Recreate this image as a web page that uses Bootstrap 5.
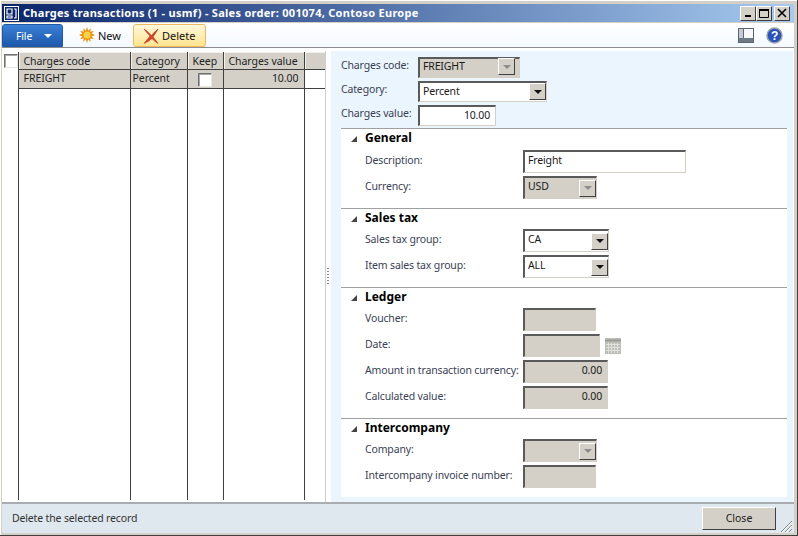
<!DOCTYPE html>
<html lang="en">
<head>
<meta charset="utf-8">
<title>Charges transactions</title>
<link href="https://cdn.jsdelivr.net/npm/bootstrap@5.3.0/dist/css/bootstrap.min.css" rel="stylesheet">
<style>
html,body{height:100%;margin:0;overflow:hidden}
body{font-family:"Noto Sans","DejaVu Sans",sans-serif;font-size:10.5px;letter-spacing:-.15px;color:#1c1c1c;background:#d4d0c8}
.win{width:798px;height:536px;background:#d4d0c8;border-right:1px solid #404040;border-bottom:1px solid #404040;padding:4px 3px 2px 2px;box-shadow:inset 1px 1px 0 #fff}
.win>*{flex:none}
.ttl{height:18px;background:linear-gradient(90deg,#0a246a,#a6caf0);color:#fff;font-weight:700;font-size:11px;letter-spacing:.28px;padding-left:2px;margin-bottom:1px;white-space:nowrap}
.wbtn{width:16px;height:15px;background:#d4d0c8;border:1px solid;border-color:#fff #404040 #404040 #fff;display:flex;align-items:center;justify-content:center}
.wbtn.sep{margin-left:2px}
.tbar{height:25px;background:linear-gradient(#fff,#f3f9fe);border-bottom:1px solid #8c8c8c;box-shadow:0 1px 0 #d8d8d8}
.tbtxt{padding-top:2px}
.filebtn{width:61px;height:23px;margin-top:1px;background:linear-gradient(#3b80d6,#1d58ab);border:1px solid #1f58a6;border-radius:3px 3px 0 0;color:#fff;padding:0 0 0 13px}
.caret-w{width:0;height:0;border:4px solid transparent;border-top:4px solid #fff;border-bottom:0;margin-left:12px}
.delbtn{width:73px;height:23px;margin-top:1px;margin-left:8px;background:linear-gradient(#fff8dc,#ffe48f);border:1px solid #f0b860;border-radius:3px;font-size:11px;letter-spacing:0;padding-left:9px;color:#111}
.delbtn svg{margin-right:3px}
.newbtn{margin:3px 0 0 16px;font-size:11px;letter-spacing:0;color:#111;width:46px}
.newbtn svg{margin-right:3px}
.helpzone{margin:4px 11px 0 auto}
.bodyrow{height:454px;background:#fff;padding-top:3px;position:relative}
.gridwrap{width:323px;background:#fff;padding-bottom:2px;padding-top:1px}
.gridt{border-collapse:collapse;table-layout:fixed;width:323px;height:100%;color:#222;letter-spacing:-.05px}
.gridt th{font-weight:400;background:#d4d0c8;height:17px;padding:2px 0 0 5px;border-left:1px solid #404040;border-bottom:1px solid #404040;line-height:13px;white-space:nowrap;box-shadow:inset 1px 1px 0 #f2f0ea}
.gridt td{height:19px;padding:0 0 2px 5px;border-left:1px solid #404040;border-bottom:1px solid #404040;background:#d4d0c8;line-height:16px;white-space:nowrap}
.gridt tr.fill td{height:auto;background:#fff;border-bottom:0}
.gridt .cz{background:#fff!important;border:0!important;box-shadow:none;padding:0}
.gridt td.wh{background:#fff}
.gridt td.pct{padding-left:2px}
.gridt .num{text-align:right;padding-right:5px}
.gridt .keep{padding:0;text-align:center}
.chk{display:inline-block;width:14px;height:14px;background:#fff;border:1px solid;border-color:#707070 #e8e6e0 #e8e6e0 #707070;box-shadow:inset 1px 1px 0 #a8a8a8;vertical-align:middle}
.chk.top{margin:1px 0 0 2px;display:block}
.split{width:6px;border-left:1px solid #c4d0de;background:#fff}
.dots{width:2px;height:18px;margin-left:1px;background:repeating-linear-gradient(#8a8a8a 0 1px,transparent 1px 3px)}
.formside{width:462px;background:#ebf5fd;padding:4px 6px 5px 10px;height:451px}
.formside>*{flex:none}
.toprow{height:24px}
.toprow .lbl{width:77px;padding-bottom:2px}
.lbl{color:#3a3f55;white-space:nowrap}
.fld{height:21px;border:1px solid;border-color:#5a5a5a #d4d0c8 #d4d0c8 #5a5a5a;border-top-width:2px;border-left-width:2px;background:#fff;padding-left:3px;color:#1a1a1a;display:flex;align-items:center;justify-content:space-between;line-height:1}
.fld.ro{background:#d4d0c8}
.fld.r{justify-content:flex-end;padding-right:5px}
.toprow .fld.ro{padding-bottom:2px}
.ab{width:17px;height:17px;background:#d4d0c8;border:1px solid;border-color:#fff #404040 #404040 #fff;display:flex;align-items:center;justify-content:center;flex:none}
.ab i{display:block;width:0;height:0;border:4px solid transparent;border-top:4px solid #111;border-bottom:0}
.ab.off i{border-top-color:#8c8c8c}
.panel{background:#fff;margin-top:1px}
.sect{border-top:1px solid #a0a0a0;padding-bottom:6px}
.shead{height:20px;font-weight:700;font-size:12px;letter-spacing:0;color:#000;padding:0 0 3px 10px}
.shead.first{height:21px}
.tri{width:0;height:0;border-style:solid;border-width:0 0 6px 6px;border-color:transparent transparent #444 transparent;margin:2px 8px 0 0}
.frow{height:26px;padding-left:24px}
.frow .lbl{width:158px;line-height:21px}
.frow .fld{height:23px;padding-bottom:3px}
.frow .ab{margin-top:3px}
.cal{margin:4px 0 0 5px}
.w74{width:74px}.w73{width:73px}.w86{width:86px}.w163{width:163px}.w77{width:77px}.w85{width:85px}
.w102{width:102px}.w129{width:129px}.w78{width:78px}
.stat{height:31px;background:#dfe7ef;border-top:2px solid #a9adb2;padding-left:10px;color:#333}
.closebtn{width:74px;height:23px;background:#d4d0c8;border:1px solid;border-color:#fff #404040 #404040 #fff;margin-left:auto;margin-right:5px;color:#1a1a1a;font-size:10.5px;border-radius:0;padding:0;line-height:1}
.grip{margin-top:14px;margin-right:2px}
</style>
</head>
<body>
<div class="win d-flex flex-column">
  <div class="ttl d-flex align-items-center">
    <svg width="15" height="15" viewBox="0 0 15 15" class="me-1"><rect x=".5" y=".5" width="14" height="14" fill="#0a246a" stroke="#fff"/><path d="M3 3h5v5H3zM10 3h2v9h-2M3 10h5v2H3z" fill="none" stroke="#fff" stroke-width="1.2"/></svg>
    <span>Charges transactions (1 - usmf) - Sales order: 001074, Contoso Europe</span>
    <div class="d-flex ms-auto me-1 align-items-center">
      <div class="wbtn"><svg width="10" height="10"><rect x="2" y="7" width="6" height="2" fill="#000"/></svg></div>
      <div class="wbtn"><svg width="10" height="10"><path d="M.5 1.500h9v8h-9z" fill="none" stroke="#000"/><rect y="1" width="10" height="2" fill="#000"/></svg></div>
      <div class="wbtn sep"><svg width="10" height="10"><path d="M1 1l8 8M9 1l-8 8" stroke="#000" stroke-width="1.6"/></svg></div>
    </div>
  </div>
  <div class="tbar d-flex align-items-start">
    <div class="filebtn d-flex align-items-center"><span class="tbtxt">File</span><span class="caret-w"></span></div>
    <div class="newbtn d-flex align-items-center">
      <svg width="16" height="16" viewBox="0 0 17 17"><path d="M8.500 0l1.300 4 2.700-3-.5 4 4-1-2.500 3 3.500 1.500-3.500 1.500 2.500 3-4-1 .5 4-2.700-3-1.300 4-1.300-4-2.700 3 .5-4-4 1 2.500-3L0 8.500 3.500 7 1 4l4 1-.5-4 2.700 3z" fill="#e8920f"/><circle cx="8.500" cy="8.500" r="3.800" fill="#ffd24a"/></svg>
      <span class="tbtxt">New</span>
    </div>
    <div class="delbtn d-flex align-items-center">
      <svg width="16" height="16" viewBox="0 0 16 16"><path d="M1 1c4 2.500 6 5 7.500 6.500C10.500 5 12.500 3 15 1c-1 2.500-3.500 5.500-5 8 1.500 2 3.500 4 5 6.500-2.500-1.500-4.500-3.500-6-5C6.500 12.500 4.500 14 1 15.500c2-2.500 4-5 6-7.500C5.500 6 3 4 1 1z" fill="#d8412a" stroke="#a52a18" stroke-width=".5"/></svg>
      <span class="tbtxt">Delete</span>
    </div>
    <div class="helpzone d-flex align-items-center gap-2">
      <svg width="16" height="15" viewBox="0 0 16 15" class="me-1"><rect x=".5" y=".5" width="15" height="14" fill="#f6f8fa" stroke="#5b6670"/><rect x="1" y="1" width="4" height="9" fill="#c4cad0"/><rect x="1" y="10" width="14" height="4" fill="#6d7a85"/><path d="M5.500 1v9" stroke="#5b6670"/></svg>
      <svg width="17" height="17" viewBox="0 0 17 17"><circle cx="8.500" cy="8.500" r="7.500" fill="#2a52b8" stroke="#9aa0a8" stroke-width="1.500"/><text x="8.500" y="13" text-anchor="middle" font-family="Liberation Sans,sans-serif" font-weight="700" font-size="12" fill="#fff">?</text></svg>
    </div>
  </div>
  <div class="bodyrow d-flex">
    <div class="gridwrap">
      <table class="gridt">
        <colgroup><col style="width:16px"><col style="width:112px"><col style="width:57px"><col style="width:36px"><col style="width:81px"><col style="width:21px"></colgroup>
        <tr><th class="cz"><span class="chk top"></span></th><th>Charges code</th><th>Category</th><th>Keep</th><th>Charges value</th><th></th></tr>
        <tr><td class="cz"></td><td>FREIGHT</td><td class="pct">Percent</td><td class="keep"><span class="chk"></span></td><td class="num">10.00</td><td class="wh"></td></tr>
        <tr class="fill"><td class="cz"></td><td></td><td></td><td></td><td></td><td></td></tr>
      </table>
    </div>
    <div class="split d-flex align-items-center"><div class="dots"></div></div>
    <div class="formside d-flex flex-column">
      <div class="toprow d-flex align-items-center"><div class="lbl">Charges code:</div><div class="fld ro w102"><span>FREIGHT</span><span class="ab off me-1"><i></i></span></div></div>
      <div class="toprow d-flex align-items-center"><div class="lbl">Category:</div><div class="fld w129"><span>Percent</span><span class="ab"><i></i></span></div></div>
      <div class="toprow d-flex align-items-center"><div class="lbl">Charges value:</div><div class="fld r w78">10.00</div></div>
      <div class="panel">
        <div class="sect">
          <div class="shead first d-flex align-items-center"><span class="tri"></span>General</div>
          <div class="frow d-flex align-items-start"><div class="lbl">Description:</div><div class="fld w163">Freight</div></div>
          <div class="frow d-flex align-items-start"><div class="lbl">Currency:</div><div class="fld ro w74"><span>USD</span><span class="ab off"><i></i></span></div></div>
        </div>
        <div class="sect">
          <div class="shead d-flex align-items-center"><span class="tri"></span>Sales tax</div>
          <div class="frow d-flex align-items-start"><div class="lbl">Sales tax group:</div><div class="fld w86"><span>CA</span><span class="ab"><i></i></span></div></div>
          <div class="frow d-flex align-items-start"><div class="lbl">Item sales tax group:</div><div class="fld w86"><span>ALL</span><span class="ab"><i></i></span></div></div>
        </div>
        <div class="sect">
          <div class="shead d-flex align-items-center"><span class="tri"></span>Ledger</div>
          <div class="frow d-flex align-items-start"><div class="lbl">Voucher:</div><div class="fld ro w73"></div></div>
          <div class="frow d-flex align-items-start"><div class="lbl">Date:</div><div class="fld ro w77"></div>
            <svg width="16" height="16" viewBox="0 0 16 16" class="cal"><rect width="16" height="16" fill="#bdbdb9"/><path d="M0 2.500h16" stroke="#9a9a96" stroke-width="2"/><path d="M1 6.500h14M1 9.500h14M1 12.500h14M3.500 5v10M6.500 5v10M9.500 5v10M12.500 5v10" stroke="#e0e0dc"/></svg>
          </div>
          <div class="frow d-flex align-items-start"><div class="lbl">Amount in transaction currency:</div><div class="fld ro r w85">0.00</div></div>
          <div class="frow d-flex align-items-start"><div class="lbl">Calculated value:</div><div class="fld ro r w85">0.00</div></div>
        </div>
        <div class="sect">
          <div class="shead d-flex align-items-center"><span class="tri"></span>Intercompany</div>
          <div class="frow d-flex align-items-start"><div class="lbl">Company:</div><div class="fld ro w74"><span></span><span class="ab off"><i></i></span></div></div>
          <div class="frow d-flex align-items-start"><div class="lbl">Intercompany invoice number:</div><div class="fld ro w73"></div></div>
        </div>
      </div>
    </div>
  </div>
  <div class="stat d-flex align-items-center">
    <span>Delete the selected record</span>
    <button type="button" class="btn closebtn">Close</button>
    <svg class="grip" width="11" height="12" viewBox="0 0 11 12"><path d="M0 12L11 1M4 12l7-7M8 12l3-3" stroke="#8a8a8a"/><path d="M1 12L11 2M5 12l6-6" stroke="#fff"/></svg>
  </div>
</div>
<script src="https://cdn.jsdelivr.net/npm/bootstrap@5.3.0/dist/js/bootstrap.bundle.min.js"></script>
</body>
</html>
